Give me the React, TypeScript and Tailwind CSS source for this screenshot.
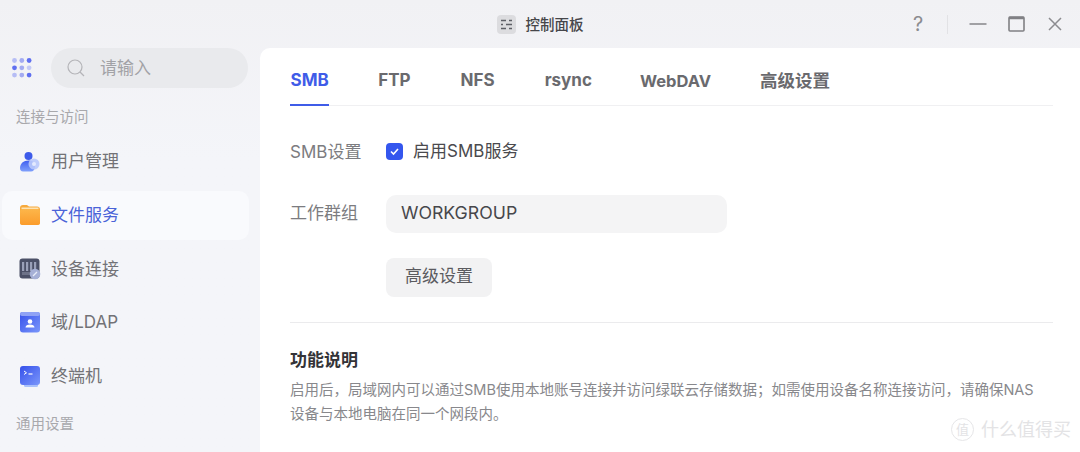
const font = "font-['Inter','Noto_Sans_CJK_SC',sans-serif]";

function AppsIcon() {
  const c = ["#b6bdf5", "#a3abf2", "#5f6ff0", "#5f6ff0", "#a3abf2", "#c3c9f7", "#b6bdf5", "#a3abf2", "#5f6ff0"];
  return (
    <svg width="20" height="20" viewBox="0 0 20 20">
      {c.map((f, i) => (
        <circle key={i} cx={2.5 + (i % 3) * 7.3} cy={2.5 + Math.floor(i / 3) * 7.3} r="2.4" fill={f} />
      ))}
    </svg>
  );
}

function UserIcon() {
  return (
    <svg width="22" height="22" viewBox="0 0 22 22">
      <defs>
        <linearGradient id="u1" x1="0" y1="0" x2="0" y2="1">
          <stop offset="0" stopColor="#3f5ff0" />
          <stop offset="1" stopColor="#7fa0fb" />
        </linearGradient>
      </defs>
      <circle cx="9.5" cy="5" r="4" fill="#3d5bea" />
      <path d="M1 17c0-4.5 3.5-7.5 8.5-7.5S16 12 16 16c0 2.5-2 4.500-4 4.500H4c-2 0-3-1.500-3-3.500z" fill="url(#u1)" />
      <circle cx="15" cy="13" r="5.500" fill="#b9c9fb" opacity="0.9" />
      <circle cx="15" cy="13" r="2" fill="#e4eafe" />
    </svg>
  );
}

function FolderIcon() {
  return (
    <svg width="20" height="20" viewBox="0 0 20 20">
      <defs>
        <linearGradient id="f1" x1="0" y1="0" x2="0" y2="1">
          <stop offset="0" stopColor="#fdb64a" />
          <stop offset="1" stopColor="#fb9c2c" />
        </linearGradient>
      </defs>
      <path d="M0 3c0-1.700 1.200-3 3-3h4l2 1.500h8c1.800 0 3 1.200 3 3V17c0 1.800-1.200 3-3 3H3c-1.800 0-3-1.200-3-3z" fill="#f7a93c" />
      <rect x="0" y="4" width="20" height="16" rx="2.500" fill="url(#f1)" />
      <rect x="1.500" y="2.500" width="17" height="1.500" fill="#fde3b4" />
    </svg>
  );
}

function DeviceIcon() {
  return (
    <svg width="22" height="22" viewBox="0 0 22 22">
      <rect x="0.500" y="0.500" width="20" height="20" rx="3" fill="#4b5067" />
      {[4, 8, 12, 16].map((x) => (
        <rect key={x} x={x - 1} y="4" width="2.200" height="9" fill="#9aa0b8" />
      ))}
      <rect x="3" y="14" width="15" height="3" fill="#6d7288" />
      <circle cx="16" cy="16" r="5.300" fill="#a6b0d6" />
      <path d="M14 18l4-4" stroke="#e8ecf8" strokeWidth="1.200" />
    </svg>
  );
}

function DomainIcon() {
  return (
    <svg width="20" height="21" viewBox="0 0 20 21">
      <defs>
        <linearGradient id="d1" x1="0" y1="0" x2="1" y2="1">
          <stop offset="0" stopColor="#3550ea" />
          <stop offset="1" stopColor="#7b97fb" />
        </linearGradient>
      </defs>
      <rect x="0" y="0" width="20" height="20.500" rx="3" fill="url(#d1)" />
      <rect x="0" y="0" width="20" height="4" rx="2" fill="#8fa2f5" />
      <circle cx="10" cy="9.500" r="2.300" fill="#ffffff" />
      <path d="M5.500 15.500c0-2 2-3 4.500-3s4.500 1 4.500 3z" fill="#ffffff" />
    </svg>
  );
}

function TerminalIcon() {
  return (
    <svg width="20" height="21" viewBox="0 0 20 21">
      <defs>
        <linearGradient id="t1" x1="0" y1="0" x2="1" y2="1">
          <stop offset="0" stopColor="#3550ea" />
          <stop offset="1" stopColor="#7b97fb" />
        </linearGradient>
      </defs>
      <rect x="4" y="17" width="14" height="4" rx="1.500" fill="#a9c1fb" />
      <rect x="0" y="0" width="20" height="19" rx="3" fill="url(#t1)" />
      <path d="M4 5l2.500 1.800L4 8.500" stroke="#ffffff" strokeWidth="1" fill="none" />
      <path d="M8.500 8h4" stroke="#ffffff" strokeWidth="1.200" />
    </svg>
  );
}

function PanelIcon() {
  return (
    <svg width="19" height="19" viewBox="0 0 19 19">
      <rect width="19" height="19" rx="4" fill="#dcdcdf" />
      <path d="M4 5.500h5M12 5.500h3M4 9.500h2M9 9.500h6M4 13.500h5M12 13.500h3" stroke="#5e5f66" strokeWidth="1.500" />
    </svg>
  );
}

function NavItem({ icon, label, active }: { icon: React.ReactNode; label: string; active?: boolean }) {
  return (
    <div
      className={`mx-[2px] flex h-[49px] w-[247px] items-center gap-[10px] rounded-[10px] pl-[17px] text-[17px] ${
        active ? "bg-[#f9fafd] text-[#4a63d8]" : "text-[#727276]"
      }`}
    >
      <span className="flex w-[22px] shrink-0 justify-center">{icon}</span>
      <span className="pt-[1px]">{label}</span>
    </div>
  );
}

function Tab({ label, active, size }: { label: string; active?: boolean; size: string }) {
  return (
    <div
      className={`-mb-px flex h-[47px] items-center border-b-2 pb-[1px] font-bold ${size} ${
        active ? "border-[#3f5ce8] text-[#3f5ce8]" : "border-transparent text-[#6a6a6e]"
      }`}
    >
      {label}
    </div>
  );
}

export default function App() {
  return (
    <div className={`flex h-[452px] w-[1080px] flex-col overflow-hidden bg-gradient-to-b from-[#f1f1f4] to-[#f4f5f9] to-[35%] ${font}`}>
      <header className="flex h-[48px] shrink-0 items-center">
        <div className="flex-1 pl-[17px]" />
        <div className="flex items-center gap-[10px] pt-[1px] text-[14.500px] font-medium text-[#46464a]">
          <PanelIcon />
          <span>控制面板</span>
        </div>
        <div className="flex flex-1 items-center justify-end pr-[17px] text-[#8c8c90]">
          <span className="flex w-[16px] justify-center text-[20px] leading-none">?</span>
          <span className="ml-[21px] h-[19px] w-px bg-[#e2e2e5]" />
          <svg className="ml-[21px]" width="18" height="18" viewBox="0 0 18 18">
            <path d="M0.500 9h17" stroke="#8c8c90" strokeWidth="1.600" />
          </svg>
          <svg className="ml-[21px]" width="18" height="18" viewBox="0 0 18 18">
            <rect x="1" y="2" width="15" height="14" rx="1" fill="none" stroke="#808084" strokeWidth="1.600" />
            <path d="M1 3h15" stroke="#808084" strokeWidth="2.500" />
          </svg>
          <svg className="ml-[21px]" width="16" height="16" viewBox="0 0 16 16">
            <path d="M2 2l12 12M14 2L2 14" stroke="#8c8c90" strokeWidth="1.500" />
          </svg>
        </div>
      </header>

      <div className="flex min-h-0 flex-1">
        <aside className="w-[260px] shrink-0 overflow-hidden">
          <div className="flex items-center pl-[12px]">
            <AppsIcon />
            <div className="ml-[19px] flex h-[40px] w-[197px] items-center rounded-[20px] bg-[#e9eaed] pl-[16px] text-[17px] text-[#a2a2a6]">
              <svg width="18" height="18" viewBox="0 0 18 18" fill="none">
                <circle cx="8" cy="8" r="7" stroke="#b4b4b8" strokeWidth="1.200" />
                <path d="M13 13l4 4" stroke="#b4b4b8" strokeWidth="1.200" />
              </svg>
              <span className="ml-[15px] pt-[1px]">请输入</span>
            </div>
          </div>
          <div className="mt-[19px] pl-[16px] text-[14.500px] leading-[20px] text-[#a8a8ac]">连接与访问</div>
          <div className="mt-[10px] flex flex-col gap-[4.700px]">
            <NavItem icon={<UserIcon />} label="用户管理" />
            <NavItem icon={<FolderIcon />} label="文件服务" active />
            <NavItem icon={<DeviceIcon />} label="设备连接" />
            <NavItem icon={<DomainIcon />} label="域/LDAP" />
            <NavItem icon={<TerminalIcon />} label="终端机" />
          </div>
          <div className="mt-[13px] pl-[16px] text-[14.500px] leading-[20px] text-[#a8a8ac]">通用设置</div>
        </aside>

        <main className="relative flex-1 rounded-tl-[10px] bg-white pl-[30px] pr-[27px] pt-[11px]">
          <nav className="flex gap-[50px] border-b border-[#f0f0f2]">
            <Tab label="SMB" active size="text-[17px] px-[0.500px]" />
            <Tab label="FTP" size="text-[17px] -ml-[1px]" />
            <Tab label="NFS" size="text-[17px]" />
            <Tab label="rsync" size="text-[17px]" />
            <Tab label="WebDAV" size="text-[16.500px] -ml-[2px]" />
            <Tab label="高级设置" size="text-[17.500px] -ml-[1px]" />
          </nav>

          <div className="mt-[33px] flex items-center">
            <span className="w-[96px] text-[17px] leading-[24px] text-[#7c7c80]">SMB设置</span>
            <span className="flex h-[17px] w-[17px] items-center justify-center rounded-[4px] bg-[#3456ee]">
              <svg width="11" height="11" viewBox="0 0 11 11" fill="none">
                <path d="M2 5.500l2.500 2.500L9 3" stroke="#ffffff" strokeWidth="1.600" />
              </svg>
            </span>
            <span className="ml-[10px] text-[17px] text-[#4a4a4e]">启用SMB服务</span>
          </div>

          <div className="mt-[30px] flex items-center">
            <span className="w-[96px] text-[17px] text-[#7c7c80]">工作群组</span>
            <div className="flex h-[38px] w-[341px] items-center rounded-[10px] bg-[#f4f4f5] pl-[15px] text-[17.700px] text-[#47474b]">
              WORKGROUP
            </div>
          </div>

          <button className="ml-[96px] mt-[25px] flex h-[39px] w-[106px] items-center justify-center rounded-[8px] bg-[#f2f2f3] text-[17px] text-[#5b5b5f]">
            高级设置
          </button>

          <div className="mt-[25px] h-px bg-[#ebebed]" />

          <h2 className="mt-[25px] text-[17px] font-bold leading-[24px] text-[#333337]">功能说明</h2>
          <p className="mt-[6px] text-[14.500px] leading-[24px] text-[#88888c]">
            启用后，局域网内可以通过SMB使用本地账号连接并访问绿联云存储数据；如需使用设备名称连接访问，请确保NAS
            <br />
            设备与本地电脑在同一个网段内。
          </p>

          <div className="absolute bottom-[9px] right-[9px] flex items-center gap-[7px] text-[18px] text-[#e3e3e5]">
            <span className="flex h-[23px] w-[23px] items-center justify-center rounded-full border border-[#e6e6e8] text-[13px]">值</span>
            <span>什么值得买</span>
          </div>
        </main>
      </div>
    </div>
  );
}
